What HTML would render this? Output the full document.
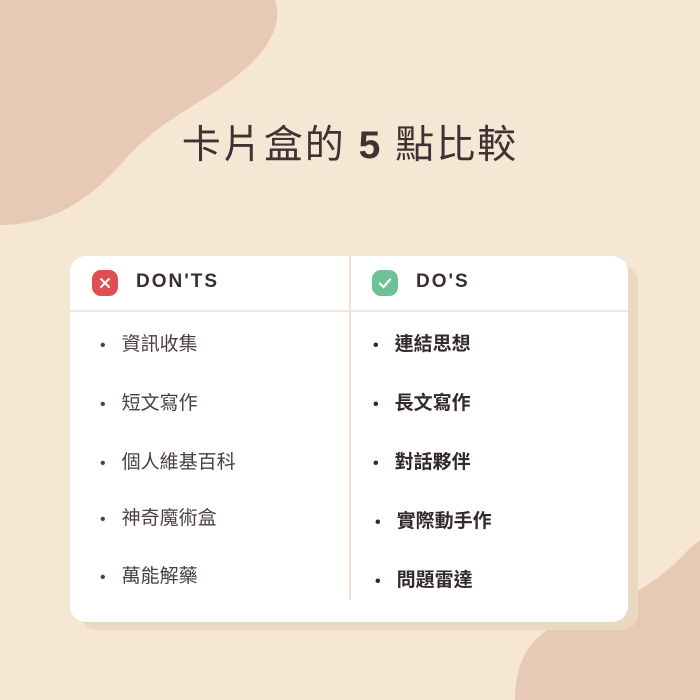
<!DOCTYPE html>
<html><head><meta charset="utf-8"><style>
body{margin:0;width:700px;height:700px;background:#f6e7d5;position:relative;overflow:hidden;font-family:"Liberation Sans","Noto Sans CJK TC",sans-serif;}
.t{position:absolute;top:114px;left:0;width:700px;text-align:center;font-size:39px;color:#3d3333;letter-spacing:2px}
.sh{position:absolute;left:80px;top:266px;width:558px;height:364px;background:#ead9c0;border-radius:16px}
.card{position:absolute;left:70px;top:256px;width:558px;height:366px;background:#fff;border-radius:16px}
.hl{position:absolute;left:0;top:54px;width:558px;height:2px;background:#f3e6d2}
.vl{position:absolute;left:279px;top:0;width:2px;height:344px;background:#f0e2cc}
.h{position:absolute;top:15px;font-size:19px;font-weight:bold;color:#3a2e2e;letter-spacing:2px}
.ic{position:absolute;top:14px;width:26px;height:26px;border-radius:9px}
.i{position:absolute;font-size:19px;color:#4a4040}
.b{font-weight:bold;color:#332a2a}
.i::before{content:"•";margin-right:16px;font-size:16px}
</style></head><body>
<svg width="700" height="700" style="position:absolute;left:0;top:0">
<path d="M0 0 L275 0 C285 30 260 60 225 85 C190 110 160 120 120 165 C80 210 40 225 0 225 Z" fill="#e6cab6"/>
<path d="M515 700 C515 650 540 625 590 610 C640 595 665 575 690 548 L700 540 L700 700 Z" fill="#e6cab6"/>
</svg>
<div class="t">卡片盒的 <b>5</b> 點比較</div>
<div class="sh"></div>
<div class="card">
<div class="hl"></div><div class="vl"></div>
<div class="ic" style="left:22px;background:#df4f4f"><svg width="26" height="26"><path d="M9 9L17 17M17 9L9 17" stroke="#fff" stroke-width="2" stroke-linecap="round"/></svg></div>
<div class="h" style="left:66px">DON'TS</div>
<div class="ic" style="left:302px;background:#6cc195"><svg width="26" height="26"><path d="M8 13.5L11.5 17L18 9.5" stroke="#fff" stroke-width="2.2" fill="none" stroke-linecap="round"/></svg></div>
<div class="h" style="left:346px">DO'S</div>
<div class="i" style="left:30px;top:73px">資訊收集</div>
<div class="i" style="left:30px;top:132px">短文寫作</div>
<div class="i" style="left:30px;top:191px">個人維基百科</div>
<div class="i" style="left:30px;top:247px">神奇魔術盒</div>
<div class="i" style="left:30px;top:305px">萬能解藥</div>
<div class="i b" style="left:303px;top:73px">連結思想</div>
<div class="i b" style="left:303px;top:132px">長文寫作</div>
<div class="i b" style="left:303px;top:191px">對話夥伴</div>
<div class="i b" style="left:305px;top:250px">實際動手作</div>
<div class="i b" style="left:305px;top:309px">問題雷達</div>
</div>
</body></html>
